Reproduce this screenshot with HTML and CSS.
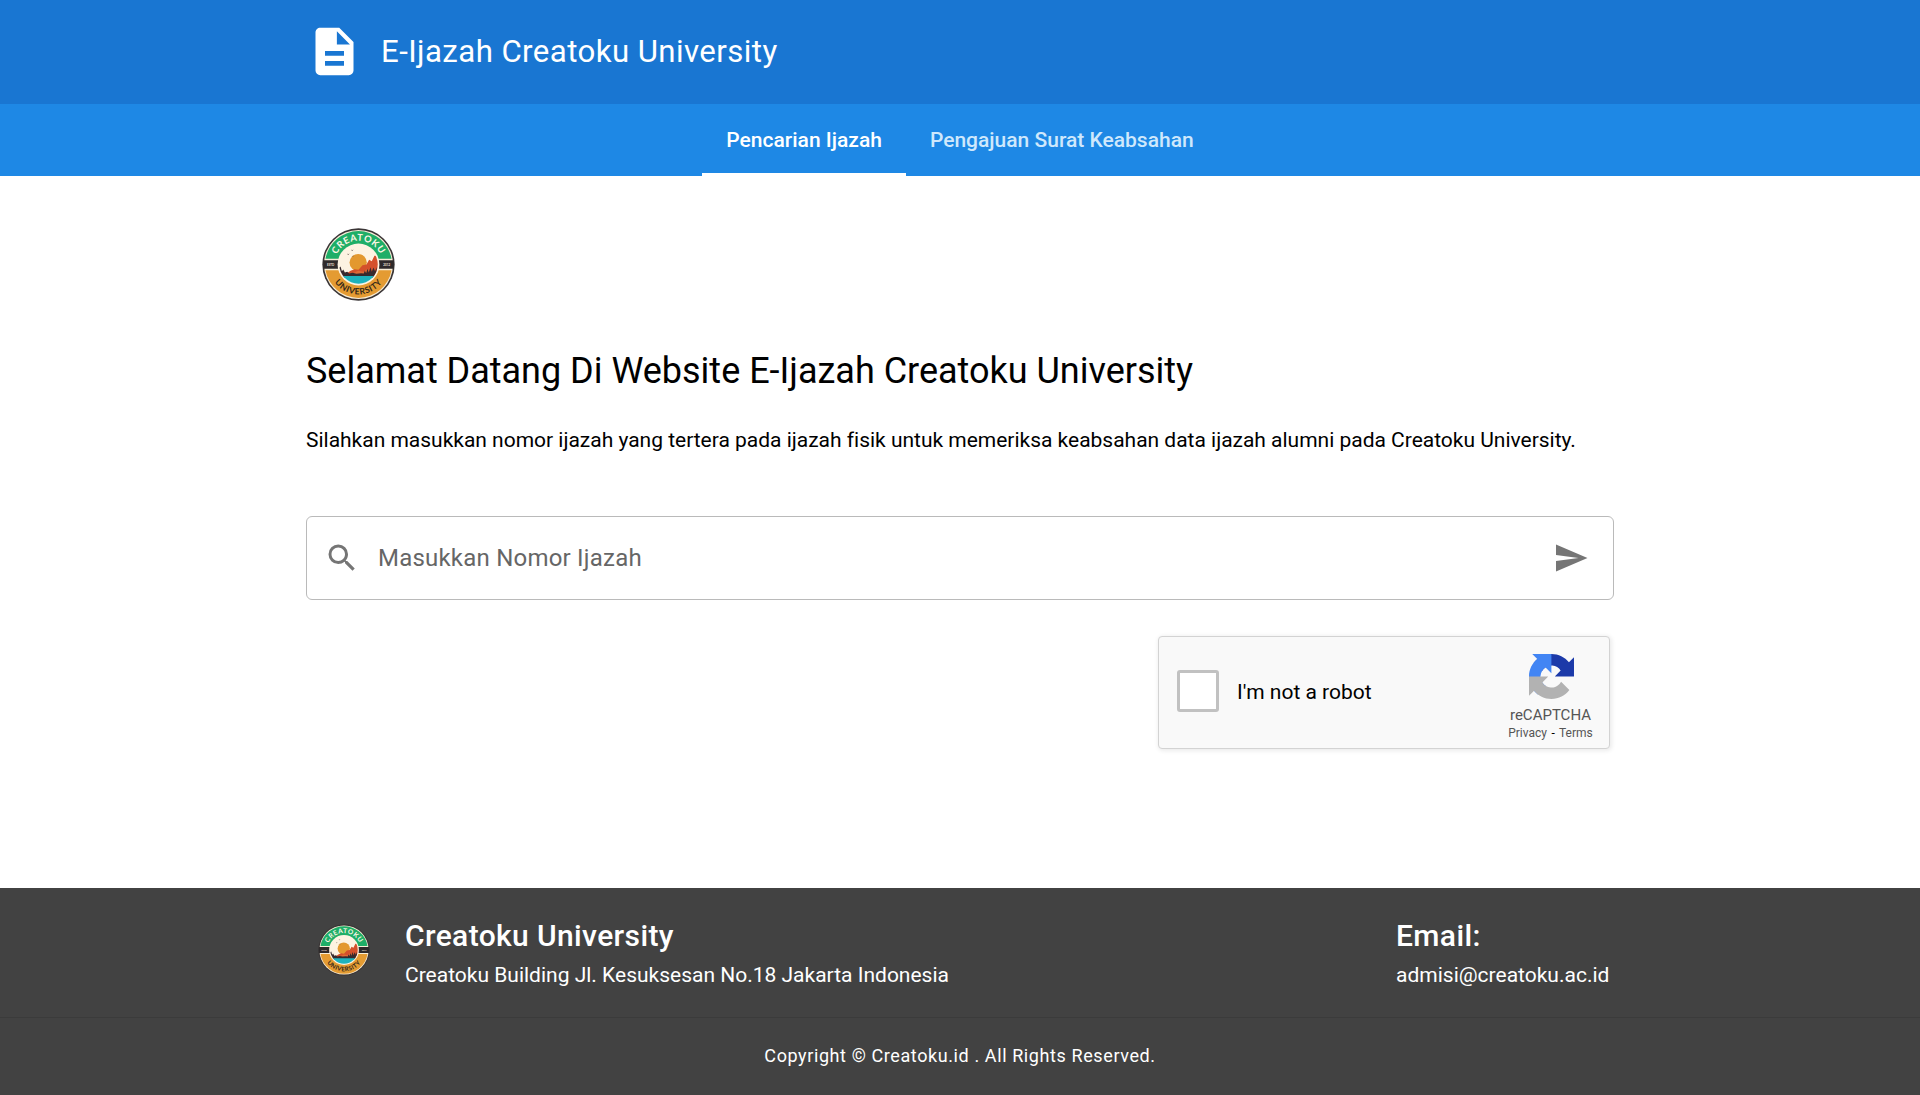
FILE: index.html
```html
<!DOCTYPE html>
<html lang="id">
<head>
<meta charset="utf-8">
<title>E-Ijazah Creatoku University</title>
<link rel="stylesheet" href="styles.css">
</head>
<body>
<svg class="sprite" aria-hidden="true">
  <defs>
    <clipPath id="scene"><circle cx="110" cy="110" r="58"/></clipPath>
    <path id="arc-top" d="M38 110A72 72 0 0 1 182 110"/>
    <path id="arc-bottom" d="M20 110A90 90 0 0 0 200 110"/>
    <symbol id="crest" viewBox="0 0 220 220">
      <circle cx="110" cy="110" r="109" fill="#3a3536"/>
      <circle cx="110" cy="110" r="104" fill="#f8eed8"/>
      <path d="M10.500 93A101 101 0 0 1 209.500 93z" fill="#1fae67"/>
      <path d="M10.500 127A101 101 0 0 0 209.500 127z" fill="#e49b32"/>
      <path d="M4 97h212v26H4z" fill="#2e2a2b"/>
      <circle cx="110" cy="110" r="63" fill="#fdf3e2"/>
      <g clip-path="url(#scene)">
        <circle cx="109" cy="104" r="26" fill="#e3982f"/>
        <path d="M70 140L86 129 98 124 110 126 122 112 134 110 142 96 150 100 158 84 176 84V150H70z" fill="#d4502b"/>
        <path d="M92 136l18-7 14 3 12-8 10 4-6 18H92z" fill="#e06a35"/>
        <path d="M48 150V106l4 14 4-4 4 14 4-5 5 9 7-2 6 5 10-2 12 3 14-2 8 1 3-9 4 8 4-13 4 11 5-16 4 14 5-13 5 11 5-12v32z" fill="#382a2d"/>
        <path d="M48 145h124v30H48z" fill="#1eb3bd"/>
        <path d="M75 77l4 2 4-2-4 4zM87 65l4 2 4-2-4 4zM90 83l3 2 4-2-4 4z" fill="#4a3b35"/>
      </g>
      <text class="crest-top"><textPath href="#arc-top" startOffset="50%">CREATOKU</textPath></text>
      <text class="crest-bottom"><textPath href="#arc-bottom" startOffset="50%">UNIVERSITY</textPath></text>
      <text class="crest-year" x="26" y="113.500">ESTD</text>
      <text class="crest-year" x="195" y="113.500">2012</text>
    </symbol>
  </defs>
</svg>

<header class="topbar">
  <div class="container topbar-inner">
    <svg class="doc-icon" viewBox="0 0 24 24"><path fill="currentColor" d="M13 9h5.500L13 3.500V9M6 2h8l6 6v12a2 2 0 0 1-2 2H6a2 2 0 0 1-2-2V4c0-1.110.89-2 2-2m10 16v-2H8v2h8m0-4.200v-2H8v2h8z"/></svg>
    <div class="brand">E-Ijazah Creatoku University</div>
  </div>
</header>
<nav class="tabs">
  <a class="tab active">Pencarian Ijazah</a>
  <a class="tab">Pengajuan Surat Keabsahan</a>
</nav>

<main class="container main">
  <svg class="logo"><use href="#crest"/></svg>
  <h1 class="heading">Selamat Datang Di Website E-Ijazah Creatoku University</h1>
  <p class="intro">Silahkan masukkan nomor ijazah yang tertera pada ijazah fisik untuk memeriksa keabsahan data ijazah alumni pada Creatoku University.</p>
  <div class="search">
    <svg class="icon" viewBox="0 0 24 24"><path fill="currentColor" d="M9.500 3A6.500 6.500 0 0 1 16 9.500c0 1.610-.59 3.090-1.560 4.230l.27.27h.79l5 5-1.500 1.500-5-5v-.79l-.27-.27A6.516 6.516 0 0 1 9.500 16 6.500 6.500 0 0 1 3 9.500 6.500 6.500 0 0 1 9.500 3m0 2C7 5 5 7 5 9.500S7 14 9.500 14 14 12 14 9.500 12 5 9.500 5z"/></svg>
    <span class="placeholder">Masukkan Nomor Ijazah</span>
    <svg class="icon" viewBox="0 0 24 24"><path fill="currentColor" d="M2 21l21-9L2 3v7l15 2-15 2v7z"/></svg>
  </div>
  <div class="captcha">
    <span class="checkbox"></span>
    <span class="captcha-label">I'm not a robot</span>
    <div class="captcha-brand">
      <svg class="captcha-logo" viewBox="0 0 64 64">
        <path fill="#1c3aa9" d="M64 31.955l-.033-1.370V4.687l-7.160 7.160C50.948 4.674 42.033.093 32.050.093c-10.389 0-19.622 4.960-25.458 12.640l11.736 11.860a15.550 15.550 0 0 1 4.754-5.334c2.050-1.600 4.952-2.906 8.968-2.906.485 0 .86.057 1.135.163 4.976.393 9.288 3.140 11.828 7.124l-8.307 8.307L64 31.953"/>
        <path fill="#4285f4" d="M31.862.094l-1.370.033H4.594l7.160 7.160C4.580 13.147 0 22.060 0 32.046c0 10.388 4.960 19.622 12.640 25.458L24.500 45.768a15.550 15.550 0 0 1-5.334-4.754c-1.600-2.050-2.906-4.952-2.906-8.968 0-.485.057-.86.163-1.135.393-4.976 3.140-9.288 7.124-11.828l8.307 8.307L31.860.095"/>
        <path fill="#b2b2b2" d="M.001 32.045l.033 1.370v25.898l7.160-7.160c5.860 7.173 14.774 11.754 24.760 11.754 10.388 0 19.622-4.960 25.458-12.640l-11.736-11.860a15.550 15.550 0 0 1-4.754 5.334c-2.050 1.600-4.952 2.906-8.968 2.906-.485 0-.86-.057-1.135-.163-4.976-.393-9.288-3.140-11.828-7.124l8.307-8.307c-10.522.04-22.400.066-27.295-.005"/>
      </svg>
      <div class="captcha-name">reCAPTCHA</div>
      <div class="captcha-links">Privacy <span class="dash">-</span> Terms</div>
    </div>
  </div>
</main>

<footer class="footer">
  <div class="container footer-info">
    <svg class="footer-logo"><use href="#crest"/></svg>
    <div class="address">
      <div class="footer-title">Creatoku University</div>
      <div class="footer-text">Creatoku Building Jl. Kesuksesan No.18 Jakarta Indonesia</div>
    </div>
    <div class="contact">
      <div class="footer-title">Email:</div>
      <div class="footer-text">admisi@creatoku.ac.id</div>
    </div>
  </div>
  <div class="copyright">Copyright © Creatoku.id . All Rights Reserved.</div>
</footer>
</body>
</html>
```
FILE: styles.css
```css
* { box-sizing: border-box; }
body {
  margin: 0;
  height: 1095px;
  display: flex;
  flex-direction: column;
  background: #fff;
  color: #000;
  font-family: Roboto, "Liberation Sans", sans-serif;
  overflow: hidden;
}
.sprite { position: absolute; width: 0; height: 0; }
.container { width: 1308px; margin: 0 auto; }

.topbar { height: 104px; background: #1976d2; color: #fff; }
.topbar-inner { display: flex; align-items: center; height: 103px; }
.doc-icon { width: 57px; height: 57px; margin-right: 18px; }
.brand { padding-top: 1px; font-size: 31.2px; line-height: 36px; letter-spacing: .0135em; white-space: nowrap; }

.tabs { display: flex; justify-content: center; height: 72px; background: #1e88e5; }
.tab {
  padding: 3px 24px 0;
  border-bottom: 3px solid transparent;
  font-size: 21px;
  font-weight: 500;
  line-height: 66px;
  white-space: nowrap;
  color: #cfe8fc;
}
.tab.active { color: #fff; border-color: #fff; }

.main { flex: 1; display: flex; flex-direction: column; }
.logo { width: 73px; height: 73px; margin: 52px 0 0 16px; }
.heading { margin: 46px 0 0; font-size: 36px; line-height: 48px; font-weight: 400; letter-spacing: -.01px; white-space: nowrap; }
.intro { margin: 30px 0 0; font-size: 21px; line-height: 30px; letter-spacing: -.012px; white-space: nowrap; }
.search {
  display: flex;
  align-items: center;
  height: 84px;
  margin-top: 61px;
  padding: 0 24px 0 17px;
  border: 1px solid #bababa;
  border-radius: 6px;
  color: #757575;
}
.icon { width: 36px; height: 36px; flex: none; }
.placeholder { flex: 1; padding-left: 18px; font-size: 24px; line-height: 36px; letter-spacing: .009em; color: #666; }
.captcha {
  display: flex;
  align-items: center;
  align-self: flex-end;
  width: 452px;
  height: 113px;
  margin: 36px 4px 0 0;
  padding-left: 18px;
  border: 1px solid #d3d3d3;
  border-radius: 4px;
  background: #f9f9f9;
  box-shadow: 1px 1px 4px 1px rgba(0, 0, 0, .08);
}
.checkbox { width: 42px; height: 42px; margin-top: -3px; border: 3px solid #c1c1c1; border-radius: 3px; background: #fff; }
.captcha-label { flex: 1; padding: 0 0 2px 18px; font-size: 21px; line-height: 26px; }
.captcha-brand { width: 117px; align-self: flex-start; padding-top: 17px; text-align: center; color: #555; }
.captcha-logo { display: block; width: 45px; height: 45px; margin: 0 auto 0 37px; }
.captcha-name { margin-top: 7px; font-size: 15px; line-height: 18px; }
.captcha-links { font-size: 12px; line-height: 18px; }
.dash { padding: 0 1.5px; color: #000; }

.footer { height: 207px; background: #424242; color: #fff; }
.footer-info { display: flex; height: 129px; }
.footer-logo { width: 52px; height: 52px; margin: 35.5px 35.5px 0 11.5px; }
.address { flex: 1; padding-top: 30px; }
.contact { width: 218px; padding-top: 30px; }
.footer-title { font-size: 30px; line-height: 36px; font-weight: 500; letter-spacing: .0125em; white-space: nowrap; }
.footer-text { margin-top: 5px; font-size: 21px; line-height: 32px; white-space: nowrap; }
.copyright { height: 78px; border-top: 1px solid #3b3b3b; font-size: 18px; line-height: 75px; letter-spacing: .0333em; text-align: center; }

.crest-top, .crest-bottom, .crest-year { font-family: Lato, "Open Sans", sans-serif; font-weight: 700; text-anchor: middle; }
.crest-top { font-size: 28px; letter-spacing: 2px; fill: #fdf6e6; }
.crest-bottom { font-size: 26px; letter-spacing: 1.500px; fill: #332719; }
.crest-year { font-size: 9px; fill: #e8dfd0; }
```
